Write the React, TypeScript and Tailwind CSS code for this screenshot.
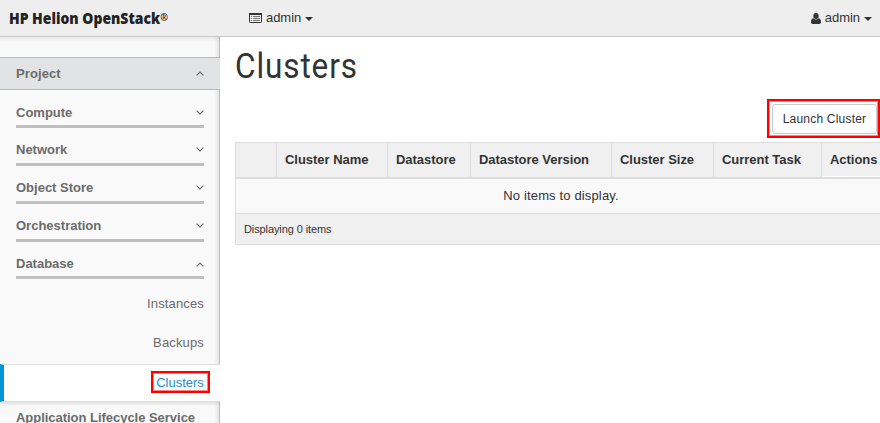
import React from "react";

function Chevron({ up }: { up?: boolean }) {
  return (
    <svg width="8" height="5" viewBox="0 0 8 5" fill="none" stroke="#6b6b6b" strokeWidth="1.2">
      <path d={up ? "M.6 4.4 4 1l3.4 3.4" : "M.6.6 4 4 7.4.6"} />
    </svg>
  );
}

function Caret() {
  return (
    <svg width="8" height="4" viewBox="0 0 8 4" fill="#333">
      <path d="M0 0h8L4 4z" />
    </svg>
  );
}

function Section({ label, height, up }: { label: string; height: string; up?: boolean }) {
  return (
    <div className={`mx-4 flex w-[188px] items-end justify-between border-b-[3px] border-[#bfbfbf] ${height}`}>
      <span className="text-[13px] leading-[16px] font-bold whitespace-nowrap">{label}</span>
      <span className={up ? "mb-[5px]" : "mb-[6px]"}>
        <Chevron up={up} />
      </span>
    </div>
  );
}

const th = "shrink-0 border-l border-[#ddd] pl-2 whitespace-nowrap";

export default function App() {
  return (
    <div className="flex h-[423px] w-[880px] flex-col overflow-hidden bg-white font-['Liberation_Sans',Arial,sans-serif] text-[13px] text-[#333]">
      <header className="flex h-[37px] shrink-0 items-center border-b border-[#c8c8c8] bg-[#eee]">
        <div className="w-[249px] pl-[9px]">
          <span className="inline-block origin-left scale-x-[0.845] font-['Open_Sans',sans-serif] text-[16.5px] leading-[36px] font-extrabold whitespace-nowrap text-[#222]">
            HP Helion OpenStack<span className="inline-block -translate-y-[3px] text-[11px] leading-none font-bold">®</span>
          </span>
        </div>
        <div className="flex flex-1 items-center">
          <svg width="13" height="10" viewBox="0 0 13 10" fill="none" stroke="#333">
            <rect x=".5" y=".5" width="12" height="9" rx=".8" />
            <path d="M0 1h13" strokeWidth="2" />
            <path d="M2 3.5h1M4 3.5h7M2 5.5h1M4 5.5h7M2 7.5h1M4 7.5h7" stroke="#777" />
          </svg>
          <span className="ml-1 tracking-[-0.05px]">admin</span>
          <span className="mt-[2px] ml-1 flex">
            <Caret />
          </span>
        </div>
        <div className="flex items-center pr-2">
          <svg width="10" height="11" viewBox="0 0 10 11" fill="#333">
            <ellipse cx="5" cy="3" rx="2.7" ry="3" />
            <path d="M2.4 5.2Q0 5.5 0 9.2 0 11 1.8 11h6.4Q10 11 10 9.2 10 5.5 7.6 5.2 5 7.8 2.4 5.2z" />
          </svg>
          <span className="ml-1 tracking-[-0.05px]">admin</span>
          <span className="mt-[2px] ml-1 flex">
            <Caret />
          </span>
        </div>
      </header>

      <div className="flex min-h-0 flex-1">
        <nav className="flex w-[220px] shrink-0 flex-col overflow-hidden bg-[#f9f9f9] bg-[linear-gradient(to_left,#bdbdbd_1px,#e6e6e6_1px,#f9f9f9_6px)] text-[#6b6b6b]">
          <div className="h-5 shrink-0 bg-[linear-gradient(to_bottom,#00000010,transparent_5px)]" />
          <div className="flex h-[33px] shrink-0 items-center justify-between border-y border-[#b8babb] bg-[#e1e3e4] px-4">
            <span className="font-bold tracking-[0.1px]">Project</span>
            <Chevron up />
          </div>
          <Section label="Compute" height="h-[38px] shrink-0 pb-[4px]" />
          <Section label="Network" height="h-[38px] shrink-0 pb-[5px]" />
          <Section label="Object Store" height="h-[38px] shrink-0 pb-[5px]" />
          <Section label="Orchestration" height="h-[38px] shrink-0 pb-[5px]" />
          <Section label="Database" height="h-[37px] shrink-0 pb-[4px]" up />
          <div className="mt-[15px] shrink-0 pr-4 text-right leading-[20px] tracking-[0.15px]">Instances</div>
          <div className="mt-[19px] shrink-0 pr-4 text-right leading-[20px] tracking-[0.15px]">Backups</div>
          <div className="mt-[11px] flex h-[38px] shrink-0 items-start justify-end border-y border-l-4 border-y-[#e0e0e0] border-l-[#0096d6] bg-white pt-[6px] pr-[10px] shadow-[0_2px_3px_#0000001a]">
            <span className="flex h-[22px] w-[59px] items-center justify-center border-2 border-[#f00] pt-[2px] pr-[1px] text-[#1b8fd0] shadow-[inset_0_0_0_1px_#ff8080]">
              Clusters
            </span>
          </div>
          <div className="mt-[8px] shrink-0 pl-4 leading-[16px] font-bold tracking-[-0.03px] whitespace-nowrap">
            Application Lifecycle Service
          </div>
        </nav>

        <main className="flex min-w-0 flex-1 flex-col pl-[15px]">
          <h1 className="h-[62px] shrink-0 font-['Roboto',sans-serif] text-[35px] leading-[59px]">
            <span className="inline-block origin-left scale-x-[0.9] tracking-[1px]">Clusters</span>
          </h1>
          <div className="flex shrink-0 justify-end">
            <div className="flex h-[39px] w-[113px] border-2 border-[#f00] p-[3px] pr-[1px] shadow-[inset_0_0_0_1px_#ff8080]">
              <button className="h-[30px] w-[105px] rounded-[3px] border border-[#ccc] bg-white text-[12px] tracking-[0.2px] whitespace-nowrap">
                Launch Cluster
              </button>
            </div>
          </div>
          <div className="mt-[4px] flex shrink-0 flex-col">
            <div className="flex h-[37px] border-t border-b-2 border-[#ddd] bg-[#f0f0f0] leading-[34px] font-bold tracking-[-0.03px]">
              <div className={`${th} w-[41px]`} />
              <div className={`${th} w-[111px]`}>Cluster Name</div>
              <div className={`${th} w-[83px]`}>Datastore</div>
              <div className={`${th} w-[141px]`}>Datastore Version</div>
              <div className={`${th} w-[102px]`}>Cluster Size</div>
              <div className={`${th} w-[108px]`}>Current Task</div>
              <div className={`${th} w-[59px] shadow-[inset_0_-1px_0_#fff]`}>Actions</div>
            </div>
            <div className="h-[34px] border-l border-[#ddd] bg-[#f9f9f9] pl-[6px] text-center leading-[34px] tracking-[0.15px]">
              No items to display.
            </div>
            <div className="h-[32px] border-y border-l border-[#ddd] bg-[#f0f0f0] pl-2 text-[11px] leading-[31px] tracking-[-0.1px]">
              Displaying 0 items
            </div>
          </div>
        </main>
      </div>
    </div>
  );
}
